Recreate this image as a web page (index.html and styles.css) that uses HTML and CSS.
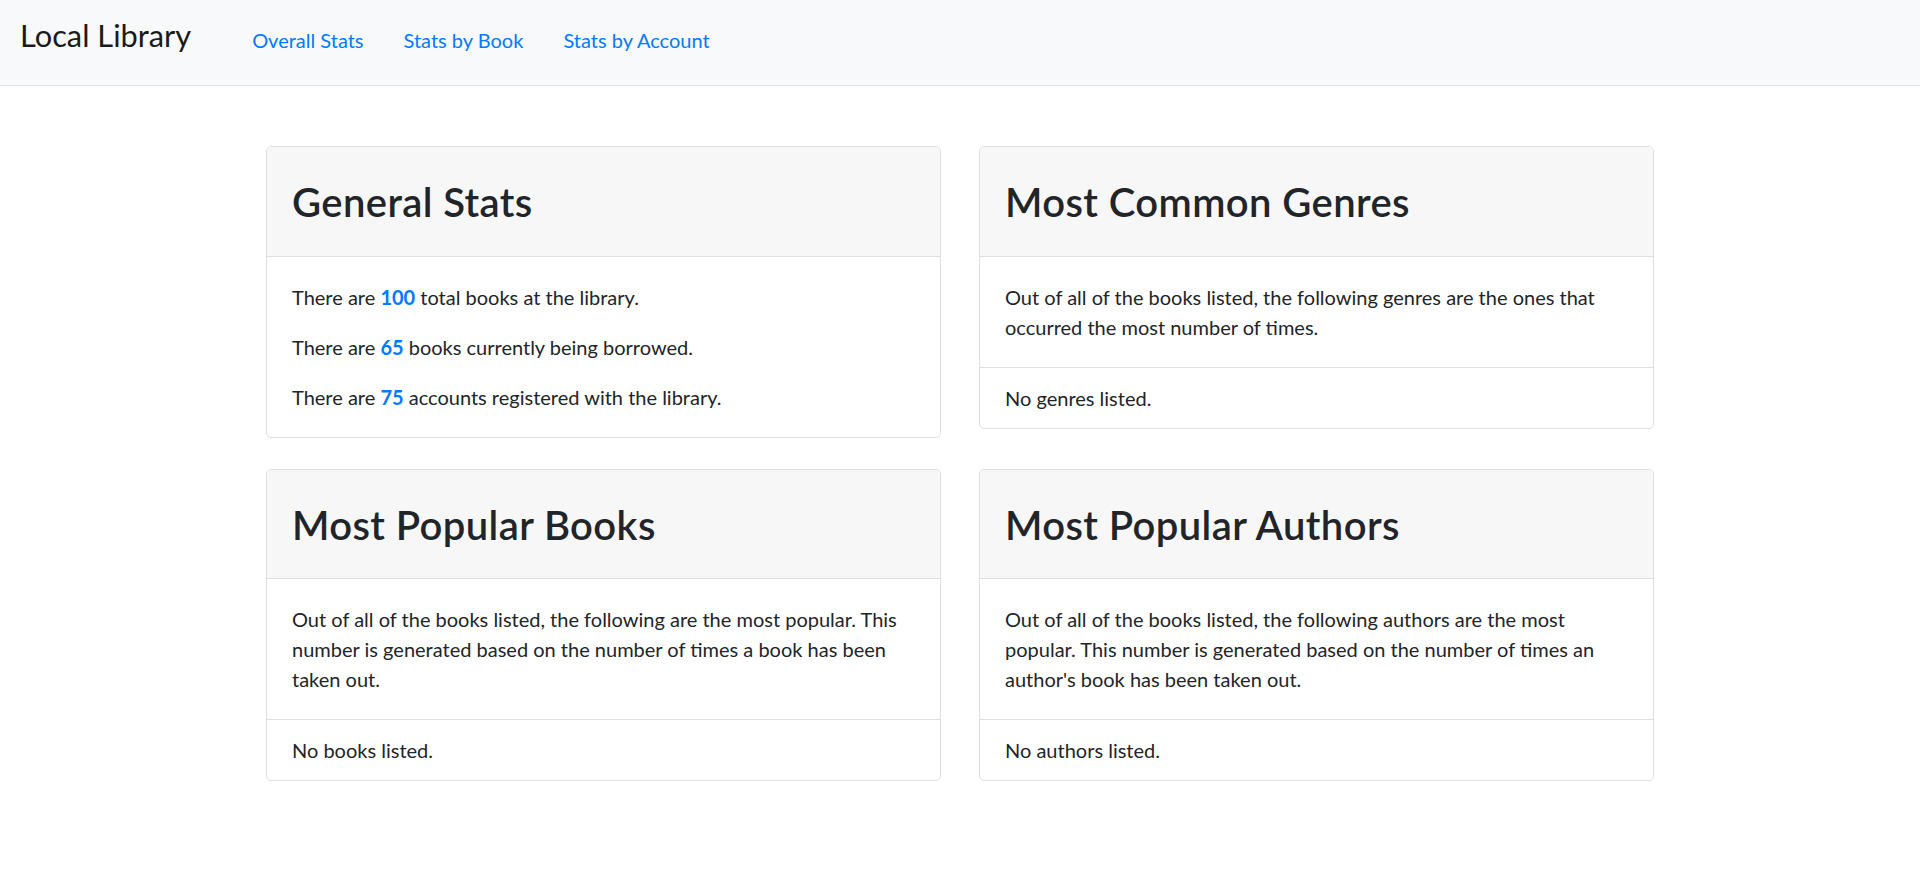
FILE: index.html
```html
<!DOCTYPE html>
<html lang="en">
<head>
<meta charset="utf-8">
<title>Local Library</title>
<link rel="stylesheet" href="styles.css">
</head>
<body>
<nav class="navbar">
  <a class="brand" href="#">Local Library</a>
  <ul class="nav">
    <li><a class="nav-link" href="#">Overall Stats</a></li>
    <li><a class="nav-link" href="#">Stats by Book</a></li>
    <li><a class="nav-link" href="#">Stats by Account</a></li>
  </ul>
</nav>

<main class="container">
  <section class="card">
    <div class="card-header"><h2>General Stats</h2></div>
    <div class="card-body">
      <p>There are <span class="num">100</span> total books at the library.</p>
      <p>There are <span class="num">65</span> books currently being borrowed.</p>
      <p>There are <span class="num">75</span> accounts registered with the library.</p>
    </div>
  </section>

  <section class="card">
    <div class="card-header"><h2>Most Common Genres</h2></div>
    <div class="card-body">
      <p>Out of all of the books listed, the following genres are the ones that occurred the most number of times.</p>
    </div>
    <ul class="list-group">
      <li class="list-item">No genres listed.</li>
    </ul>
  </section>

  <section class="card">
    <div class="card-header"><h2>Most Popular Books</h2></div>
    <div class="card-body">
      <p>Out of all of the books listed, the following are the most popular. This number is generated based on the number of times a book has been taken out.</p>
    </div>
    <ul class="list-group">
      <li class="list-item">No books listed.</li>
    </ul>
  </section>

  <section class="card">
    <div class="card-header"><h2>Most Popular Authors</h2></div>
    <div class="card-body">
      <p>Out of all of the books listed, the following authors are the most popular. This number is generated based on the number of times an author's book has been taken out.</p>
    </div>
    <ul class="list-group">
      <li class="list-item">No authors listed.</li>
    </ul>
  </section>
</main>
</body>
</html>
```
FILE: styles.css
```css
* { box-sizing: border-box; }

html, body {
  margin: 0;
  padding: 0;
  background: #ffffff;
}

body {
  font-family: Lato, "Noto Sans", sans-serif;
  font-size: 20px;
  line-height: 30px;
  color: #212529;
}

a { text-decoration: none; }

/* Navbar */
.navbar {
  display: flex;
  align-items: flex-start;
  height: 86px;
  padding: 13px 20px 0;
  background: #f8f9fa;
  border-bottom: 1px solid #dfe1e4;
}

.brand {
  font-size: 30.8px;
  line-height: 45px;
  color: #1a1a1a;
  margin-right: 41px;
}

.nav {
  display: flex;
  list-style: none;
  margin: 0;
  padding: 0;
}

.nav-link {
  display: block;
  padding: 12px 20px;
  line-height: 30px;
  color: #007bff;
}

/* Cards */
.container {
  width: 1388px;
  margin: 60px auto 0;
  display: grid;
  grid-template-columns: 675px 675px;
  column-gap: 38px;
  row-gap: 31px;
  align-items: start;
}

.card {
  border: 1px solid #dfdfdf;
  border-radius: 5px;
  background: #ffffff;
  overflow: hidden;
}

.card-header {
  background: #f7f7f7;
  padding: 31px 25px 29.5px;
  border-bottom: 1px solid #dfdfdf;
}

.card-header h2 {
  margin: 0;
  font-size: 40px;
  line-height: 48px;
  font-weight: 600;
  letter-spacing: 0.4px;
  color: #212529;
}

.card-body {
  padding: 25px;
}

.card-body p {
  margin: 0 0 20px;
}

.card-body p:last-child {
  margin-bottom: 0;
}

.num {
  color: #007bff;
  font-weight: 700;
}

.list-group {
  list-style: none;
  margin: 0;
  padding: 0;
}

.list-item {
  padding: 15px 25px;
  border-top: 1px solid #dfdfdf;
}
```
